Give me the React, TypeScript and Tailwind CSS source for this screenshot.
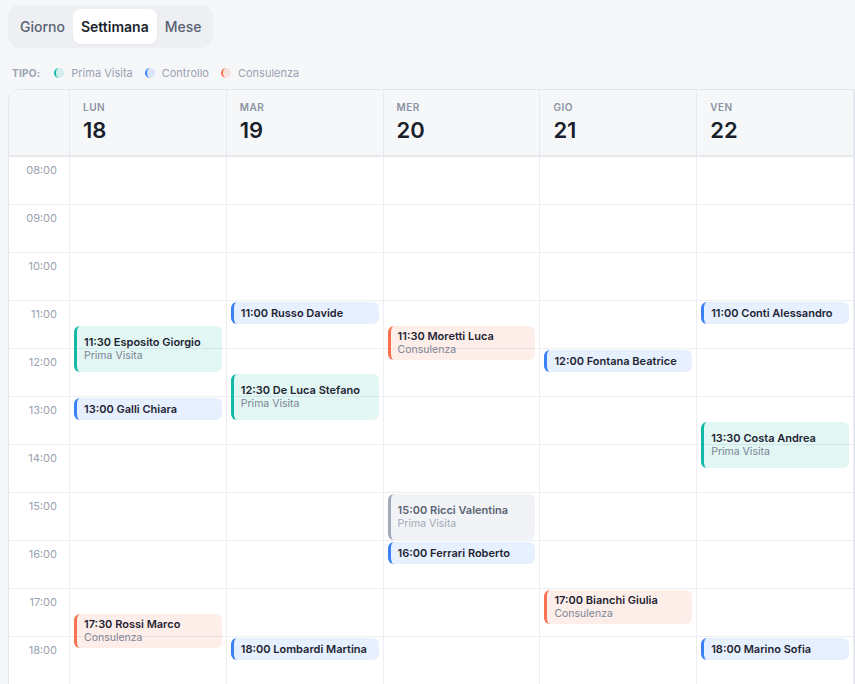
import React from 'react';

type Kind = 'prima' | 'controllo' | 'consulenza' | 'passata';

interface Appt {
  time: string;
  name: string;
  kind: Kind;
  minutes: number;
}

const HOURS = ['08:00', '09:00', '10:00', '11:00', '12:00', '13:00', '14:00', '15:00', '16:00', '17:00', '18:00', '19:00'];
const ROW = 48;

const KIND_LABEL: Record<Kind, string> = {
  prima: 'Prima Visita',
  controllo: 'Controllo',
  consulenza: 'Consulenza',
  passata: 'Prima Visita',
};

const KIND_STYLE: Record<Kind, { box: string; title: string; sub: string }> = {
  prima: { box: 'border-[#14b8a6] bg-[#14b8a6]/[0.12]', title: 'text-[#1e2433]', sub: 'text-[#7b8494]' },
  controllo: { box: 'border-[#3b82f6] bg-[#3b82f6]/[0.12]', title: 'text-[#1e2433]', sub: 'text-[#7b8494]' },
  consulenza: { box: 'border-[#f97352] bg-[#f97352]/[0.12]', title: 'text-[#1e2433]', sub: 'text-[#7b8494]' },
  passata: { box: 'border-[#a3a8ba] bg-[#94a3b8]/[0.13]', title: 'text-[#5b6473]', sub: 'text-[#a3abb7]' },
};

const DAYS: { label: string; num: string; appts: Appt[] }[] = [
  {
    label: 'LUN',
    num: '18',
    appts: [
      { time: '11:30', name: 'Esposito Giorgio', kind: 'prima', minutes: 60 },
      { time: '13:00', name: 'Galli Chiara', kind: 'controllo', minutes: 30 },
      { time: '17:30', name: 'Rossi Marco', kind: 'consulenza', minutes: 45 },
    ],
  },
  {
    label: 'MAR',
    num: '19',
    appts: [
      { time: '11:00', name: 'Russo Davide', kind: 'controllo', minutes: 30 },
      { time: '12:30', name: 'De Luca Stefano', kind: 'prima', minutes: 60 },
      { time: '18:00', name: 'Lombardi Martina', kind: 'controllo', minutes: 30 },
    ],
  },
  {
    label: 'MER',
    num: '20',
    appts: [
      { time: '11:30', name: 'Moretti Luca', kind: 'consulenza', minutes: 45 },
      { time: '15:00', name: 'Ricci Valentina', kind: 'passata', minutes: 60 },
      { time: '16:00', name: 'Ferrari Roberto', kind: 'controllo', minutes: 30 },
    ],
  },
  {
    label: 'GIO',
    num: '21',
    appts: [
      { time: '12:00', name: 'Fontana Beatrice', kind: 'controllo', minutes: 30 },
      { time: '17:00', name: 'Bianchi Giulia', kind: 'consulenza', minutes: 45 },
    ],
  },
  {
    label: 'VEN',
    num: '22',
    appts: [
      { time: '11:00', name: 'Conti Alessandro', kind: 'controllo', minutes: 30 },
      { time: '13:30', name: 'Costa Andrea', kind: 'prima', minutes: 60 },
      { time: '18:00', name: 'Marino Sofia', kind: 'controllo', minutes: 30 },
    ],
  },
];

function AppointmentCard({ appt }: { appt: Appt }) {
  const [h, m] = appt.time.split(':').map(Number);
  const top = (h - 8) * ROW + m * 0.8 + 1;
  const height = appt.minutes * 0.8 - 2;
  const s = KIND_STYLE[appt.kind];
  return (
    <div
      className={`absolute left-1 right-1 flex flex-col justify-center rounded-md border-l-[3px] pl-[7px] pr-2 ${s.box}`}
      style={{ top, height }}
    >
      <div className={`text-[11px] font-semibold leading-[14px] truncate ${s.title}`}>
        {appt.time} {appt.name}
      </div>
      {appt.minutes > 30 && (
        <div className={`text-[10.5px] leading-[14px] truncate ${s.sub}`}>{KIND_LABEL[appt.kind]}</div>
      )}
    </div>
  );
}

function LegendDot({ color }: { color: string }) {
  return <span className={`inline-block h-[10px] w-[10px] rounded-full border-l-2 ${color}`} />;
}

export default function App() {
  return (
    <div className="h-screen overflow-hidden bg-[#f6f7f9] pl-2 pt-[5px] font-['Inter','Noto_Sans',sans-serif]">
      {/* View switcher */}
      <div className="inline-flex items-center rounded-xl bg-[#edeff3] p-1">
        <button className="h-[35px] px-2 text-[14px] font-medium text-[#5a6272]">Giorno</button>
        <button className="h-[35px] rounded-lg bg-white px-2 text-[14px] font-semibold text-[#1a1f2c] shadow-[0_1px_2px_rgba(0,0,0,0.04)]">
          Settimana
        </button>
        <button className="h-[35px] px-2 text-[14px] font-medium text-[#5a6272]">Mese</button>
      </div>

      {/* Legend */}
      <div className="mt-[17px] flex items-center pl-1 text-[11px] text-[#9aa2b1]">
        <span className="mr-[14px] text-[10px] font-bold tracking-wide text-[#9aa2b1]">TIPO:</span>
        <span className="mr-[12px] flex items-center gap-[7px]">
          <LegendDot color="border-[#14b8a6] bg-[#14b8a6]/15" />
          Prima Visita
        </span>
        <span className="mr-[12px] flex items-center gap-[7px]">
          <LegendDot color="border-[#3b82f6] bg-[#3b82f6]/15" />
          Controllo
        </span>
        <span className="flex items-center gap-[7px]">
          <LegendDot color="border-[#f97352] bg-[#f97352]/15" />
          Consulenza
        </span>
      </div>

      {/* Calendar */}
      <div className="mt-[7px] overflow-hidden rounded-tl-xl border border-[#e2e6ec] bg-white">
        <div className="grid grid-cols-[61px_repeat(5,1fr)] border-b-2 border-[#e7e9ed] bg-[#f6f7f9]">
          <div className="h-[65px] border-r border-[#e7e9ed]" />
          {DAYS.map((d) => (
            <div key={d.label} className="h-[65px] border-r border-[#e7e9ed] pl-[13px] pt-[10px]">
              <div className="text-[10px] font-semibold tracking-wider text-[#8b93a3]">{d.label}</div>
              <div className="mt-[2px] text-[22px] font-semibold leading-[26px] text-[#1a1f2c]">{d.num}</div>
            </div>
          ))}
        </div>

        <div className="grid grid-cols-[61px_repeat(5,1fr)]">
          <div className="border-r border-[#eceef1]">
            {HOURS.map((h) => (
              <div key={h} className="h-[48px] border-b border-[#eceef1] pr-3 pt-[5px] text-right text-[11px] text-[#9aa2b1]">
                {h}
              </div>
            ))}
          </div>
          {DAYS.map((d) => (
            <div key={d.label} className="relative border-r border-[#eceef1]">
              {HOURS.map((h) => (
                <div key={h} className="h-[48px] border-b border-[#eceef1]" />
              ))}
              {d.appts.map((a) => (
                <AppointmentCard key={a.time + a.name} appt={a} />
              ))}
            </div>
          ))}
        </div>
      </div>
    </div>
  );
}
